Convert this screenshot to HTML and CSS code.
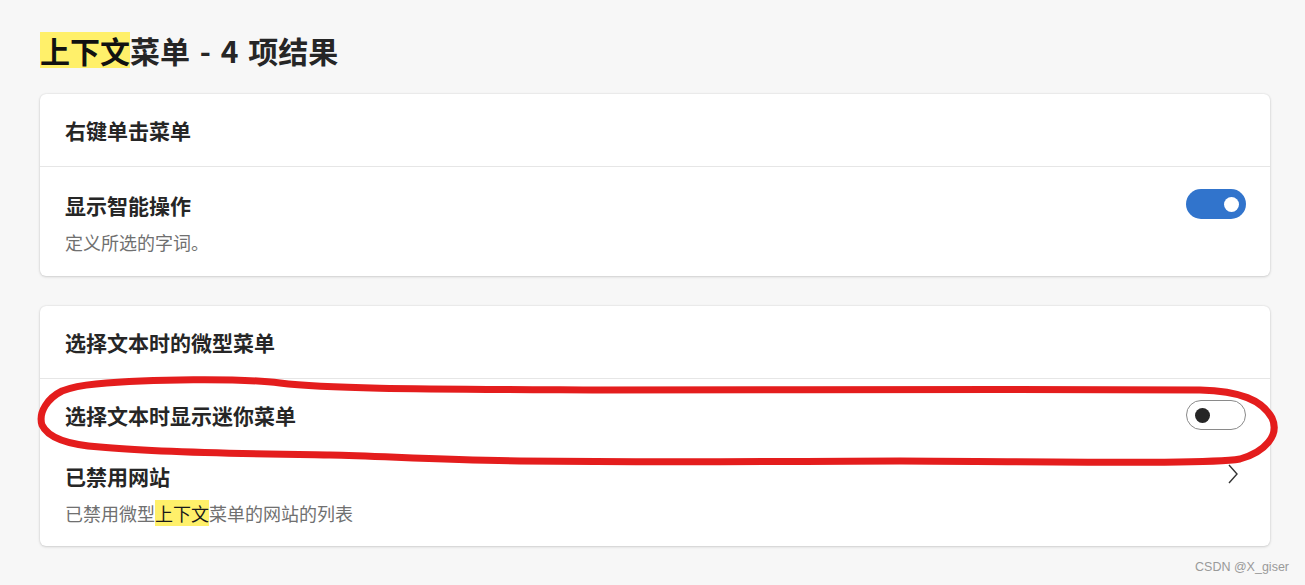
FILE: index.html
```html
<!DOCTYPE html>
<html lang="zh-CN">
<head>
<meta charset="utf-8">
<link rel="stylesheet" href="styles.css">
</head>
<body>
<div class="page">
  <h1 class="title"><span class="hl">上下文</span>菜单 - 4 项结果</h1>

  <section class="card">
    <div class="card-head">右键单击菜单</div>
    <div class="row row-desc">
      <div class="row-text">
        <div class="row-title">显示智能操作</div>
        <div class="row-sub">定义所选的字词。</div>
      </div>
      <div class="toggle on"><span class="knob"></span></div>
    </div>
  </section>

  <section class="card card2">
    <div class="card-head">选择文本时的微型菜单</div>
    <div class="row row-single">
      <div class="row-title">选择文本时显示迷你菜单</div>
      <div class="toggle off"><span class="knob"></span></div>
    </div>
    <div class="row row-link">
      <div class="row-text">
        <div class="row-title">已禁用网站</div>
        <div class="row-sub">已禁用微型<span class="hl">上下文</span>菜单的网站的列表</div>
      </div>
      <svg class="chevron" width="14" height="22" viewBox="0 0 14 22"><path d="M3 2 L11 11 L3 20" fill="none" stroke="#333" stroke-width="1.4"/></svg>
    </div>
  </section>

  <svg class="scribble" width="1305" height="585" viewBox="0 0 1305 585">
    <path d="M96 384 C150 379 240 378 280 383 C330 389 420 389 600 390 C800 390 1000 389 1200 390 C1240 391 1262 400 1272 418 C1280 435 1265 452 1240 459 C1210 464 1100 462 900 461 C800 461 700 463 520 461 C440 460 380 456 330 455 C260 454 160 453 100 447 C70 445 48 438 42 425 C38 412 48 398 62 391 C75 386 85 385 96 384 Z" fill="none" stroke="#e41d1d" stroke-width="7" stroke-linejoin="round"/>
  </svg>

  <div class="watermark">CSDN @X_giser</div>
</div>
</body>
</html>
```

FILE: styles.css
```css
html, body {
  margin: 0;
  padding: 0;
  background: #f7f7f7;
}
body {
  font-family: "Noto Sans CJK SC", "Noto Sans", sans-serif;
  color: #262626;
}
.page {
  position: relative;
  width: 1305px;
  height: 585px;
  padding: 0 35px 0 40px;
  box-sizing: border-box;
  overflow: hidden;
}
.title {
  margin: 0;
  padding-top: 32px;
  height: 94px;
  box-sizing: border-box;
  font-size: 30px;
  line-height: 36px;
  font-weight: 700;
  word-spacing: 3px;
  color: #262626;
}
.title .hl {
  display: inline-block;
  height: 36px;
  line-height: 36px;
  vertical-align: top;
  background: #fff06a;
  color: #111;
}
.hl {
  background: #fff06a;
  color: #1a1a1a;
}
.card {
  background: #fff;
  border-radius: 6px;
  box-shadow: 0 0 2px rgba(0,0,0,0.12), 0 1px 3px rgba(0,0,0,0.14);
  margin-bottom: 30px;
}
.card-head {
  height: 72px;
  display: flex;
  align-items: center;
  padding-left: 25px;
  font-size: 21px;
  font-weight: 700;
  border-bottom: 1px solid #e6e6e6;
}
.row {
  display: flex;
  align-items: center;
  justify-content: space-between;
  padding: 0 24px 0 25px;
}
.row-desc {
  padding-top: 24px;
  padding-bottom: 21px;
}
.row-single {
  height: 72px;
}
.row-link {
  padding-top: 11px;
  padding-bottom: 20px;
  padding-right: 30px;
}
.row-title {
  font-size: 21px;
  line-height: 28px;
  font-weight: 700;
  color: #262626;
}
.row-sub {
  margin-top: 10px;
  font-size: 18px;
  line-height: 26px;
  color: #707070;
}
.toggle {
  width: 60px;
  height: 30px;
  border-radius: 15px;
  box-sizing: border-box;
  position: relative;
  flex: none;
}
.toggle.on {
  background: #3174cc;
  align-self: flex-start;
  margin-top: -2px;
}
.toggle.off {
  background: #fff;
  border: 1px solid #8a8a8a;
}
.knob {
  position: absolute;
  top: 50%;
  width: 15px;
  height: 15px;
  margin-top: -7.5px;
  border-radius: 50%;
}
.toggle.on .knob {
  background: #fff;
  right: 7px;
}
.toggle.off .knob {
  background: #262626;
  left: 8px;
}
.chevron {
  flex: none;
  margin-top: -40px;
}
.scribble {
  position: absolute;
  left: 0;
  top: 0;
  pointer-events: none;
}
.watermark {
  position: absolute;
  right: 16px;
  top: 560px;
  font-family: "Liberation Sans", sans-serif;
  font-size: 12.5px;
  color: #9a9a9a;
}
```
